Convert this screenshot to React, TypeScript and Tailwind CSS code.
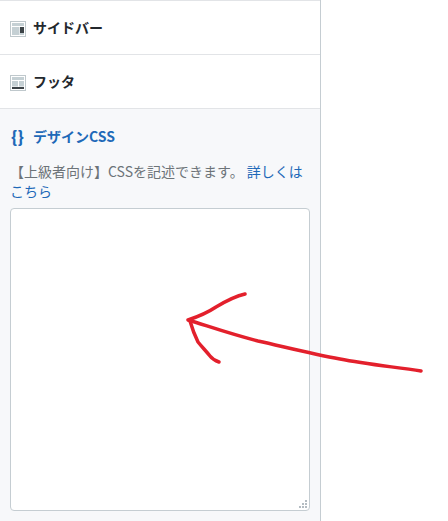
const font = { fontFamily: '"Noto Sans CJK JP", "Open Sans", sans-serif' };

const SidebarIcon = () => (
  <svg width="16" height="16" viewBox="0 0 16 16" className="mt-0.5 shrink-0">
    <rect x="0.5" y="0.5" width="15" height="15" fill="#fff" stroke="#bfc8cc" />
    <rect x="2" y="2" width="12" height="3" fill="#c5d0d4" />
    <rect x="2" y="6" width="7.5" height="8" fill="#c5d0d4" />
    <rect x="10" y="6" width="4" height="6" fill="#3c4347" />
    <rect x="10" y="12" width="4" height="2" fill="#c5d0d4" />
  </svg>
);

const FooterIcon = () => (
  <svg width="16" height="16" viewBox="0 0 16 16" className="mt-0.5 shrink-0">
    <rect x="0.5" y="0.5" width="15" height="15" fill="#fff" stroke="#bfc8cc" />
    <rect x="2" y="2" width="12" height="3" fill="#c5d0d4" />
    <rect x="2" y="6" width="6" height="5.5" fill="#c5d0d4" />
    <rect x="9" y="6" width="5" height="5.5" fill="#c5d0d4" />
    <rect x="2" y="12" width="12" height="2" fill="#3c4347" />
  </svg>
);

const Row = ({ icon, label }: { icon: React.ReactNode; label: string }) => (
  <div className="flex h-[54px] items-center gap-[7px] border-b border-[#e2e4e7] bg-white pl-[10px] text-sm font-bold text-[#23282d]">
    {icon}
    <span className="mb-0.5">{label}</span>
  </div>
);

const ResizeGrip = () => (
  <svg width="9" height="9" viewBox="0 0 9 9" className="absolute bottom-[2px] right-[2px]">
    <g fill="#b4bcc2">
      <rect x="6" y="0" width="2" height="2" />
      <rect x="3" y="3" width="2" height="2" />
      <rect x="6" y="3" width="2" height="2" />
      <rect x="0" y="6" width="2" height="2" />
      <rect x="3" y="6" width="2" height="2" />
      <rect x="6" y="6" width="2" height="2" />
    </g>
  </svg>
);

export default function App() {
  return (
    <div className="relative h-[521px] w-[448px] overflow-hidden bg-white" style={font}>
      <div className="flex h-full w-[321px] flex-col border-r border-[#c5cdd2] bg-[#f7f8fa]">
        <div className="h-px bg-[#e2e4e7]" />
        <Row icon={<SidebarIcon />} label="サイドバー" />
        <Row icon={<FooterIcon />} label="フッタ" />
        <div className="flex flex-1 flex-col px-[10px] pb-[10px] pt-[17px]">
          <div className="flex h-5 items-center gap-[7px] text-sm font-bold text-[#1e69b8]">
            <span className="w-[16px] pl-px text-base font-black leading-5">{"{}"}</span>
            <span>デザインCSS</span>
          </div>
          <p className="mt-[15px] text-sm leading-5 text-[#6c7378]">
            【上級者向け】CSSを記述できます。 <a className="text-[#1e69b8]">詳しくはこちら</a>
          </p>
          <div className="relative mt-[7px] flex-1">
            <textarea className="block h-full w-full resize-none rounded border border-[#c5cdd2] bg-white" />
            <ResizeGrip />
          </div>
        </div>
      </div>
      <svg width="448" height="521" viewBox="0 0 448 521" fill="none" className="absolute left-0 top-0">
        <g stroke="#e3202c" strokeWidth="3.5" strokeLinecap="round" strokeLinejoin="round">
          <path d="M245 294 C236 296 226 301 216 307 C207 313 197 317 188 320 C205 325 230 334 258 341 C285 347 312 354 340 359 C365 364 395 367 421 371" />
          <path d="M190 321 C192 328 195 336 198 342 C202 347 206 351 210 356 C213 360 216 361 219 362" />
        </g>
      </svg>
    </div>
  );
}
